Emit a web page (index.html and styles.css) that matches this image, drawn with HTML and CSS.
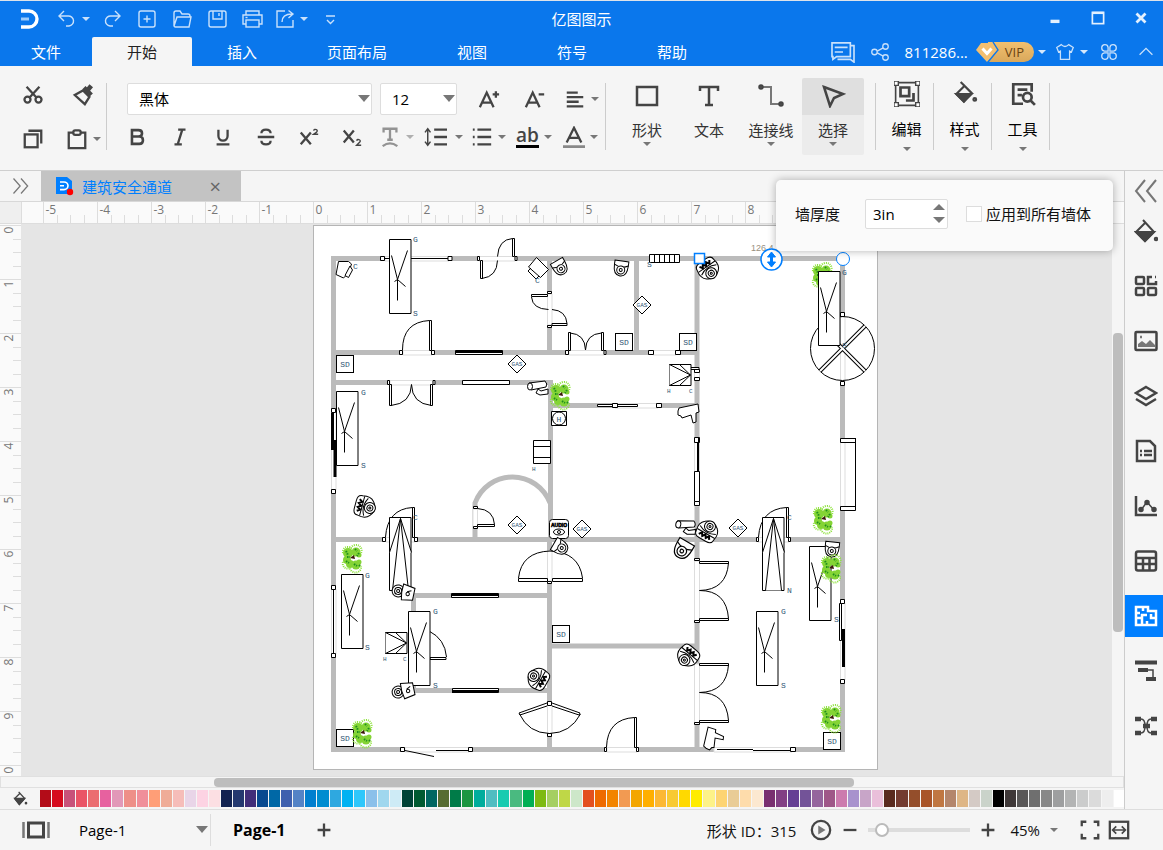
FILE: index.html
```html
<!DOCTYPE html>
<html lang="zh-CN">
<head>
  <meta charset="UTF-8">
  <title>亿图图示</title>
  <link rel="stylesheet" href="styles.css">
</head>
<body>

  <header class="header">
    <div class="title-bar">
      <div class="quick">
        <svg class="logo" viewBox="0 0 22 22"><path d="M2 3h8a8 8 0 0 1 0 16H2" fill="none" stroke="#fff" stroke-width="3.4"/><path d="M2 11h8" stroke="#9ccbfa" stroke-width="3"/></svg>
        <button class="quick-btn with-caret" aria-label="撤销"><svg viewBox="0 0 24 24"><path d="M9 4L4 9l5 5M4 9h9a5 5 0 0 1 1 10h-3"/></svg></button>
        <button class="quick-btn" aria-label="重做"><svg viewBox="0 0 24 24"><path d="M15 4l5 5-5 5M20 9h-9a5 5 0 0 0-1 10h3"/></svg></button>
        <button class="quick-btn" aria-label="新建"><svg viewBox="0 0 24 24"><rect x="4" y="4" width="16" height="16" rx="2"/><path d="M12 8.500v7M8.500 12h7"/></svg></button>
        <button class="quick-btn" aria-label="打开"><svg viewBox="0 0 24 24"><path d="M4 19V6q0-2 2-2h4l2 3h6q2 0 2 2v1M4 19l3-9h14l-2 10H5.500Q4 20 4 18"/></svg></button>
        <button class="quick-btn" aria-label="保存"><svg viewBox="0 0 24 24"><rect x="4" y="4" width="17" height="16" rx="2"/><path d="M8 4v8h9V4M14 6v3"/></svg></button>
        <button class="quick-btn" aria-label="打印"><svg viewBox="0 0 24 24"><path d="M6 8V4h13v4M6 17H3V8h19v9h-3"/><rect x="6" y="13" width="13" height="7"/><path d="M5.500 10.500h2"/></svg></button>
        <button class="quick-btn with-caret" aria-label="导出"><svg viewBox="0 0 24 24"><path d="M12 4H4v16h16v-7M9 15q0-8 10-8M15.500 3.500L20 7l-4.500 4"/></svg></button>
        <button class="quick-btn small" aria-label="自定义"><svg viewBox="0 0 24 24"><path d="M8 9h9M9 13l3.500 3.500L16 13"/></svg></button>
      </div>
      <h1 class="app-title">亿图图示</h1>
      <div class="window-controls">
        <button aria-label="最小化"><svg viewBox="0 0 16 16"><path d="M4 11h8" stroke-width="3"/></svg></button>
        <button aria-label="最大化"><svg viewBox="0 0 16 16"><rect x="3" y="3" width="10" height="10" stroke-width="1.500"/><path d="M3 3.500h10" stroke-width="2"/></svg></button>
        <button aria-label="关闭"><svg viewBox="0 0 16 16"><path d="M4 4l8 8M12 4l-8 8" stroke-width="2.500"/></svg></button>
      </div>
    </div>

    <div class="menu-bar">
      <nav class="menu">
        <button class="menu-tab file">文件</button>
        <button class="menu-tab active">开始</button>
        <button class="menu-tab">插入</button>
        <button class="menu-tab">页面布局</button>
        <button class="menu-tab">视图</button>
        <button class="menu-tab">符号</button>
        <button class="menu-tab">帮助</button>
      </nav>
      <div class="account">
        <button class="acc-btn message" aria-label="消息"><svg class="wide" viewBox="0 0 28 24"><path d="M2 2h20v15H7l-4 3V17H2zM22 5h4v18l-4-3H8M5 7h14M5 12h9" stroke-width="1.800"/></svg></button>
        <button class="acc-btn" aria-label="分享"><svg viewBox="0 0 24 24"><circle cx="6" cy="12" r="3"/><circle cx="18" cy="6" r="3"/><circle cx="18" cy="18" r="3"/><path d="M9 11l6.500-3.500M9 13l6.500 3.500"/></svg></button>
        <span class="user">811286...</span>
        <button class="vip"><svg viewBox="0 0 24 20"><path d="M5 1h12l5 8-11 11L0 8z" fill="#f3bf70" stroke="none"/><path d="M17 0l5 8-10 12" stroke="#0a77ec"/><path d="M6.500 6.500l4.500 5 4.500-5" stroke="#fff" stroke-width="3"/></svg>VIP</button>
        <i class="caret light"></i>
        <button class="acc-btn theme" aria-label="主题"><svg viewBox="0 0 24 24"><path d="M8 4L3 7l2 5 2-1v9h10v-9l2 1 2-5-5-3q-4 4-8 0z"/></svg></button>
        <i class="caret light"></i>
        <button class="acc-btn apps" aria-label="应用"><svg viewBox="0 0 24 24"><path d="M11 11H7A3.500 3.500 0 1 1 11 7zM13 11V7A3.500 3.500 0 1 1 17 11zM11 13v4A3.500 3.500 0 1 1 7 13zM13 13h4A3.500 3.500 0 1 1 13 17z"/></svg></button>
        <button class="acc-btn" aria-label="收起"><svg viewBox="0 0 24 24"><path d="M5 15l7-7 7 7"/></svg></button>
      </div>
    </div>
  </header>

  <section class="ribbon">
    <div class="group clipboard">
      <button class="tool" aria-label="剪切"><svg viewBox="0 0 24 24"><circle cx="6" cy="17" r="3.300"/><circle cx="18" cy="17" r="3.300"/><path d="M5 3l11 12M19 3L8 15"/></svg></button>
      <button class="tool" aria-label="格式刷"><svg viewBox="0 0 24 24"><path d="M3 12l9-5 7 7-5 8z"/><path d="M13 4l8 8M16 8l5-6" stroke-width="5"/></svg></button>
      <button class="tool" aria-label="复制"><svg viewBox="0 0 24 24"><rect x="3" y="7" width="14" height="14"/><path d="M7 3h14V17"/></svg></button>
      <button class="tool has-caret" aria-label="粘贴"><svg viewBox="0 0 24 24"><path d="M8 5H3v17h18V5h-5"/><rect x="8" y="2.500" width="8" height="5" rx="2"/></svg></button>
    </div>

    <div class="group font">
      <div class="row">
        <div class="select-box family"><select aria-label="字体"><option>黑体</option></select></div>
        <div class="select-box size"><select aria-label="字号"><option>12</option></select></div>
        <button class="tool grow" aria-label="增大字号"><svg viewBox="0 0 24 24"><path d="M2 21L9.500 5 17 21M5 16h9M16 7h7M19.500 3.500v7"/></svg></button>
        <button class="tool" aria-label="减小字号"><svg viewBox="0 0 24 24"><path d="M2 21L9.500 5 17 21M5 16h9M16 7h6"/></svg></button>
        <button class="tool has-caret" aria-label="对齐"><svg viewBox="0 0 24 24"><path d="M3 5h12M3 10h18M3 15h13M3 20h18"/></svg></button>
      </div>
      <div class="row">
        <button class="tool narrow" aria-label="加粗"><svg viewBox="0 0 24 24"><path d="M6.500 4.500h7q4 0 4 3.500t-4 3.500h-7zM6.500 11.500h8q4 0 4 4t-4 4h-8z" stroke-width="2.800"/></svg></button>
        <button class="tool narrow" aria-label="斜体"><svg viewBox="0 0 24 24"><path d="M10 4h8M6 20h8M14.500 4l-5 16" stroke-width="2.500"/></svg></button>
        <button class="tool narrow" aria-label="下划线"><svg viewBox="0 0 24 24"><path d="M7 4v7a5 5 0 0 0 10 0V4M5 20h14"/></svg></button>
        <button class="tool narrow" aria-label="删除线"><svg viewBox="0 0 24 24"><path d="M17 8q0-4-5-4t-5 4M17 16q0 4-5 4t-5-4M3 12h18"/></svg></button>
        <button class="tool narrow" aria-label="上标"><svg viewBox="0 0 24 24"><path d="M3 7l11 13M14 7L3 20" stroke-width="2.500"/><path d="M17 5q1-2 3-1t0 3l-3 2h5" stroke-width="1.500"/></svg></button>
        <button class="tool narrow" aria-label="下标"><svg viewBox="0 0 24 24"><path d="M3 5l11 13M14 5L3 18" stroke-width="2.500"/><path d="M17 16q1-2 3-1t0 3l-3 3h5" stroke-width="1.500"/></svg></button>
        <button class="tool has-caret disabled" aria-label="文字路径"><svg viewBox="0 0 24 24"><path d="M5 7V3h14v4M12 3v12M9 15h6M4 22q8-6 16 0"/></svg></button>
        <button class="tool has-caret" aria-label="行距"><svg class="wide" viewBox="0 0 28 24"><path d="M5 4v16M2 7l3-4 3 4M2 17l3 4 3-4" stroke-width="1.600"/><path d="M12 4h14M12 12h14M12 20h14"/></svg></button>
        <button class="tool has-caret" aria-label="项目符号"><svg viewBox="0 0 24 24"><path d="M7 4h15M7 12h15M7 20h15M2 4h2M2 12h2M2 20h2"/></svg></button>
        <button class="tool has-caret" aria-label="突出显示"><span class="ab">ab</span></button>
        <button class="tool has-caret" aria-label="字体颜色"><svg viewBox="0 0 24 24"><path d="M4 18L12 2l8 16M7 13h10"/><path d="M0 22.500h24" stroke="#888" stroke-width="3"/></svg></button>
      </div>
    </div>

    <div class="group big">
      <button class="big-btn has-caret"><svg viewBox="0 0 24 24"><rect x="2" y="3" width="20" height="18"/></svg>形状</button>
      <button class="big-btn"><svg viewBox="0 0 24 24"><path d="M3 7V3h18v4M12 3v18M8 21h8"/></svg>文本</button>
      <button class="big-btn has-caret"><svg viewBox="0 0 24 24"><path d="M3 3h9v17h9" stroke="#777" stroke-width="2"/><circle cx="2" cy="3" r="1.500"/><circle cx="22" cy="20" r="1.500"/></svg>连接线</button>
      <button class="big-btn has-caret selected"><svg viewBox="0 0 24 24"><path d="M3 3l19 7-9 4-4 8z"/></svg>选择</button>
    </div>
    <div class="group menu-group"><button class="big-btn has-caret"><svg viewBox="0 0 24 24"><path d="M1.500 1.500h21v21h-21z" stroke-width="1.500"/><path d="M0 0h4v4H0zM20 0h4v4h-4zM0 20h4v4H0zM20 20h4v4h-4z" fill="#fff" stroke-width="1.300"/><path d="M6 6h8v8H6zM18 11v7h-7"/></svg>编辑</button></div>
    <div class="group menu-group"><button class="big-btn has-caret"><svg viewBox="0 0 24 24"><path d="M8 1l10 10-7 8-7-7 7-7" stroke-width="2"/><path d="M4 12h14l-7 7z" fill="#444" stroke-width="2"/><circle cx="21" cy="17" r="1"/></svg>样式</button></div>
    <div class="group menu-group"><button class="big-btn has-caret"><svg viewBox="0 0 24 24"><path d="M20 10V3H3v18h9M7 8h9M7 13h4"/><circle cx="16" cy="15" r="4"/><path d="M19 18l4 4"/></svg>工具</button></div>
  </section>

  <main class="workspace">
    <section class="editor">
      <div class="doc-tabs">
        <button class="expand" aria-label="展开"><svg viewBox="0 0 24 24"><path d="M3 3l8 9-8 9M12 3l8 9-8 9"/></svg></button>
        <div class="doc-tab">
          <svg viewBox="0 0 20 20"><path d="M1 1h11l5 4v13H1z" fill="#007fff"/><path d="M5 6h4a4 3.800 0 0 1 0 7.600H5M5 9.800h4" fill="none" stroke="#fff" stroke-width="1.600"/><circle cx="15" cy="16" r="3.200" fill="#f00"/></svg>
          <a href="#page">建筑安全通道</a>
          <button aria-label="关闭">×</button>
        </div>
      </div>
      <div class="ruler-row">
        <div class="corner"></div>
        <svg class="ruler-x" id="rulerX"></svg>
      </div>
      <div class="stage">
        <svg class="ruler-y" id="rulerY"></svg>
        <div class="canvas">
          <svg class="page" id="page" viewBox="314 226 563 543" font-family="Liberation Sans, sans-serif">
            <defs>
              <g id="table"><path d="M0 0h21.500v74H0z" fill="#fff"/><path d="M2 16l6 24 10-29M8 40v21M5 42l3-2 8 7"/></g>
              <g id="sd"><rect width="17" height="17" fill="#fff"/><text x="8.500" y="11.500" class="plan-text mid">SD</text></g>
              <g id="gas"><path d="M0-9L9 0 0 9-9 0z" fill="#fff"/><text y="2" class="plan-text gas mid">GAS</text></g>
              <g id="plant" stroke="none">
                <g fill="#84d435"><circle cx="-4" cy="-5" r="5"/><circle cx="4" cy="-6" r="4.500"/><circle cx="-5" cy="2" r="4"/><circle cx="-2" cy="6" r="4"/><circle cx="4" cy="7" r="4.500"/><circle cx="7" cy="4" r="2.500"/><circle cx="7" cy="-3" r="2.500"/></g>
                <path d="M-9-5a5 5 0 0 1 8-5 5 5 0 0 1 10 5M-9 4a5 5 0 0 0 7 6 5 5 0 0 0 11-2" fill="none" stroke="#8ee23c" stroke-dasharray="1 1" stroke-width="2"/>
                <path d="M-6-7l2 4M3-9l2 2M7-5l-2 3M-6 3l3 2M2 6l3 2M-5-1h3M7 7l1 1" stroke="#1f8f1d" stroke-width="2" stroke-dasharray="1.500 1"/>
                <path d="M-2 0l4-3 1 4z" fill="#3a1708"/>
              </g>
              <g id="bench"><path d="M0 0h21.500v21H0z" fill="#fff"/><path d="M0 0l21 10.500L0 21M10 0l11 10.500L10 21"/></g>
              <g id="ramp"><path d="M0 0h21.500v73H0z" fill="#fff"/><path d="M0 35L11 1l11 34M3 73l8-72 8 72"/></g>
              <g id="dome"><path d="M-10-6q0-5 6-5h8q6 0 6 5 2 8-3 12-7 6-14 0-5-4-3-12z" fill="#fff"/><path d="M-10-4h20M-9 0q9-5 18 0"/><path d="M-6-8l2 3 2-3 2 3 2-3 2 3 2-3" stroke-width="2"/><circle cy="4" r="5.500"/><circle cy="4" r="3"/><circle cy="4" r="1"/></g>
              <g id="mini"><path d="M-7-7h14v4q0 11-7 11t-7-11z" fill="#fff"/><path d="M-7-3q7 4 14 0"/><circle cy="2" r="4"/><circle cy="2" r="1.500"/></g>
              <g id="bullet"><path d="M-9-5L7-7q3 3 1 6L-7 2q-4-3-2-7z" fill="#fff"/><ellipse cx="-8" cy="-1.500" rx="2.500" ry="3.500" fill="#fff"/><path d="M0 1l-2 4 4 2 8-1V1L3 3z" fill="#fff"/></g>
              <g id="gun"><path d="M-10-2L-9-5 10-9l1 8-3 1v9l-3 1-2-8-9 3-1-2-3-1z" fill="#fff"/></g>
              <g id="lock"><circle cx="-5" r="6" fill="#fff"/><circle cx="-5" r="3.500"/><circle cx="-5" r="1.500"/><path d="M-1-8l12 2v12l-11 2q-2-8-1-16z" fill="#fff"/><circle cx="5" cy="1" r="1.700"/><path d="M4-1l4-2"/></g>
            </defs>

            <g class="walls">
              <path d="M333.500 258.500h509v491h-509z"/>
              <path d="M334 352.500h363M334 382.500h217M551 405.500h146M334 539.500h509M413 595.500h137M413 690.500h137M550 646h147"/>
              <path d="M549.500 259v94M550.500 380v160M549.500 540v209M636.500 259v94M697 259v490M413.500 595v95M475 539v-36a40 40 0 0 1 75 0"/>
            </g>

            <g class="gaps">
              <path d="M385 256.500h64v4.500h-64zM479 256.500h36v4.500h-36zM547.500 294h4.500v31h-4.500zM403 350.500h29v4.500h-29zM390 380.500h43v4.500h-43zM569 350.500h35v4.500h-35zM653 350.500h23v4.500h-23zM615 403.500h43v4.500h-43z"/>
              <path d="M331.500 412h4.500v78h-4.500zM331.500 589h4.500v65h-4.500zM386 537.500h29v4.500h-29zM473 509h4.500v18H473zM758 537.500h31v4.500h-31zM547.500 551h4.500v30h-4.500zM547.500 705h4.500v29h-4.500zM405 747.500h64v4.500h-64z"/>
              <path d="M607 747.500h30v4.500h-30zM714 747.500h78v4.500h-78zM694.500 438h5v68h-5zM694.500 561h5v60h-5zM694.500 664h5v59h-5zM840.500 603h4.500v77h-4.500zM840.500 442h4.500v65h-4.500zM694.500 372h5v6h-5zM840.500 317h4.500v65h-4.500z"/>
            </g>

            <g class="lines">
              <!-- windows and posts -->
              <path d="M380.500 256.500h4v4h-4zM448 256.500h4v4h-4zM477.500 256.500h2v4h-2zM515 256.500h2v4h-2zM547.500 291.500h4v2h-4zM547.500 325.500h4v2h-4zM399.500 350.500h3v4h-3zM431.500 350.500h3v4h-3zM387.500 380.500h2v4h-2zM433 380.500h2v4h-2zM565.500 350.500h3v4h-3zM604 350.500h2v4h-2zM648.500 350.500h5v4h-5zM675.500 350.500h5v4h-5z"/>
              <path d="M331.500 408.500h4v4h-4zM331.500 489.500h4v4h-4zM331.500 585.500h4v4h-4zM331.500 653.500h4v4h-4zM382.500 537.500h3v4h-3zM414.500 537.500h3v4h-3zM473.500 506.500h4v2h-4zM473.500 526.500h4v2h-4zM756.500 537.500h2v4h-2zM788.500 537.500h2v4h-2zM547.500 581.500h4v2h-4zM547.500 701.500h4v4h-4zM547.500 733.500h4v3h-4z"/>
              <path d="M400.500 747.500h4v4h-4zM468.500 747.500h4v4h-4zM604.500 747.500h2v4h-2zM636.500 747.500h2v4h-2zM790.500 747.500h5v4h-5zM694.500 437.500h5v5h-5zM694.500 501.500h5v4h-5zM694.500 558.500h5v2h-5zM694.500 620.500h5v2h-5zM694.500 722.500h5v2h-5zM694.500 369.500h5v3h-5zM694.500 377.500h5v3h-5zM840.500 599.500h4v4h-4zM840.500 679.500h4v4h-4zM840.500 312.500h4v4h-4zM840.500 381.500h4v4h-4z"/>
              <path d="M385 258.500h63M333.500 590v63M436 750.500h33M405 750.500l29 6M717 749.500h36M753 750.500h37M597.500 404.500h40v2h-40zM690 367.500h9v2h-9z"/>
              <path d="M612.500 403.500h5v4h-5zM656.500 403.500h5v4h-5z"/>
              <path d="M462.500 380.500h47v4h-47zM455.500 350.500h47v4h-47zM451.500 593.500h47v4h-47zM452.500 688.500h46v4h-46zM697.500 442v30M694.500 471.500h5v30h-5zM698.500 437v35"/>
              <path d="M456 351.500h46M452 594.500h46M452 691.500h46M332.500 413v37M335 440v37M843.500 629v38" class="thick"/>
              <path d="M839.500 603.500h2v37h-2zM840.500 438.500h15v4h-15zM840.500 506.500h15v4h-15zM855.500 438v72"/>
              <path d="M649.500 254.500h30v8h-30zM654.500 254.500v8M659.500 254.500v8M664.500 254.500v8M669.500 254.500v8M674.500 254.500v8"/>

              <!-- doors -->
              <path d="M480.500 260.500h2v18h-2zM512.500 238.500h2v18h-2zM531.500 294.500h16v2h-16zM552 323.500h15v2h-15zM429.500 320.500h2v30h-2zM389.500 384.500h2v21h-2zM430.500 384.500h2v21h-2zM568.500 332.500h2v18h-2zM601.500 332.500h2v18h-2z"/>
              <path class="arc" d="M482 278.500q15-2 15.500-18M497.500 256.500q1-17 15-18M531.500 297q1 12 17 12.500M552 309.500q14 1 15 14M402.500 350q0-28 27-29.500M391 405.500q20-2 20.500-21 .5 19 20 21M570 333q15 1 15.500 17 .5-16 16-17"/>
              <path d="M477.500 524.500h17v2h-17zM412.500 507.500h2v30h-2zM786.500 507.500h2v30h-2zM518.500 578.500h29v3h-29zM552.500 578.500h30v3h-30zM430 657.500h16v2h-16zM634.500 717.500h2v30h-2zM699.500 561.500h29v2h-29zM699.500 618.500h29v2h-29zM699.500 663.500h29v2h-29zM699.500 720.500h29v2h-29z"/>
              <path class="arc" d="M477.500 508.500q16 1 17 16M385.500 537q2-28 27-29.500M758.500 537q2-28 28-29.500M518.500 578q3-26 31.500-27 29 1 32.500 27M429 631q16 8 17.500 26M606.500 747q1-28 28-29.500M728.500 563q-2 27-29 27.500 27 0 29 28M728.500 665q-2 27-29 27.500 27 0 29 28"/>
              <path class="arc" d="M547 703l-28 10 1 2 27-9M552 703l28 10-1 2-27-9M519.500 714q9 19 30 19.500 21-.5 31-19.500"/>

              <!-- revolving door -->
              <circle cx="842.500" cy="348.500" r="32" fill="none"/>
              <path d="M820 371l45-45M820 326l45 45" stroke-width="4"/>
              <path d="M820 371l45-45M820 326l45 45" stroke="#fff" stroke-width="2"/>

              <use href="#plant" x="822" y="276"/>
              <use href="#table" x="389.500" y="239.500"/>
              <use href="#table" x="336.500" y="391.500"/>
              <use href="#table" x="341.500" y="574.500"/>
              <use href="#table" x="408.500" y="611.500"/>
              <use href="#table" x="818.500" y="271.500"/>
              <use href="#table" x="809.500" y="546.500"/>
              <use href="#table" x="756.500" y="611.500"/>
              <use href="#ramp" x="389.500" y="517.500"/>
              <use href="#ramp" x="762.500" y="517.500"/>
              <use href="#bench" x="669.500" y="364.500"/>
              <use href="#bench" x="385.500" y="632.500"/>
              <path d="M533.500 440.500h17v23h-17zM533.500 446.500h17M533.500 457.500h17"/>

              <use href="#sd" x="336.500" y="355.500"/>
              <use href="#sd" x="615.500" y="333.500"/>
              <use href="#sd" x="679.500" y="333.500"/>
              <use href="#sd" x="552.500" y="625.500"/>
              <use href="#sd" x="336.500" y="729.500"/>
              <use href="#sd" x="823.500" y="732.500"/>
              <use href="#gas" x="517" y="364"/>
              <use href="#gas" x="642" y="305"/>
              <use href="#gas" x="517" y="525"/>
              <use href="#gas" x="582" y="529"/>
              <use href="#gas" x="738" y="528"/>
              <path d="M551.500 411.500h15v14h-15z"/><circle cx="559" cy="418.500" r="6.500"/><text x="559" y="421.500" class="plan-text mid">H</text>
              <rect x="549.500" y="519.500" width="19" height="19" rx="3"/><text x="559" y="527" class="audio mid">AUDIO</text><ellipse cx="559" cy="532" rx="5.500" ry="3"/><circle cx="559" cy="532" r="1.500"/>

              <!-- cameras -->
              <path d="M338.500 261.500l-2.500 13 7.500 3.500 5-5 3-9-3-2.500z"/><path d="M350 266l2.500 4-4 7.500-3.500-2z"/>
              <path d="M528.500 267l8-9.500 12 12-8 8z"/><path d="M531 268l-3 3 8 8 3-3" fill="none"/>
              <use href="#mini" transform="translate(560 267) rotate(-30)"/>
              <use href="#mini" transform="translate(621 268) rotate(8)"/>
              <use href="#dome" transform="translate(709 270) rotate(-35)"/>
              <use href="#dome" transform="translate(366 507) rotate(-75)"/>
              <use href="#dome" transform="translate(708 530) rotate(-150)"/>
              <use href="#dome" transform="translate(537 678) rotate(120)"/>
              <use href="#dome" transform="translate(687 657) rotate(40)"/>
              <use href="#bullet" transform="translate(538 388)"/>
              <use href="#bullet" transform="translate(686 527) rotate(8)"/>
              <use href="#gun" transform="translate(688 413)"/>
              <use href="#gun" transform="translate(712 740) rotate(-65)"/>
              <use href="#lock" transform="translate(403 592) rotate(12)"/>
              <use href="#lock" transform="translate(403 691) rotate(-12)"/>
              <use href="#mini" transform="translate(683 549) rotate(30) scale(1.200)"/>
              <use href="#mini" transform="translate(832 549) rotate(6)"/>
              <use href="#mini" transform="translate(560 547) rotate(-60)"/>

              <use href="#plant" x="560" y="395"/>
              <use href="#plant" x="352" y="558"/>
              <use href="#plant" x="823" y="519"/>
              <use href="#plant" x="831" y="568"/>
              <use href="#plant" x="362" y="733"/>
              <use href="#plant" x="831" y="718"/>
            </g>

            <g class="plan-text">
              <text x="413" y="242">G</text><text x="413" y="316">S</text>
              <text x="361" y="395">G</text><text x="361" y="468">S</text>
              <text x="365" y="578">G</text><text x="365" y="650">S</text>
              <text x="433" y="614">G</text><text x="433" y="688">S</text>
              <text x="842" y="275">G</text><text x="842" y="348">S</text>
              <text x="781" y="614">G</text><text x="781" y="688">S</text>
              <text x="834" y="622">S</text><text x="787" y="593">N</text>
              <text x="413" y="520">C</text><text x="787" y="520">C</text>
              <text x="353" y="269">C</text><text x="535" y="283">C</text><text x="647" y="267">S</text>
            </g>
            <g class="plan-text tiny">
              <text x="667" y="393">H</text><text x="689" y="393">C</text>
              <text x="383" y="661">H</text><text x="403" y="661">C</text><text x="532" y="471">H</text>
            </g>

            <!-- selected wall -->
            <text x="751" y="251" class="measure">126.4</text>
            <g fill="#fff" stroke="#007fff">
              <rect x="694.500" y="253.500" width="10" height="10" stroke-width="1.500"/>
              <circle cx="843" cy="259" r="6.500"/>
              <circle cx="771.500" cy="259.500" r="10.500" stroke-width="1.500"/>
              <path d="M771.500 252l4 5h-3v5h3l-4 5-4-5h3v-5h-3z" fill="#007fff"/>
            </g>
          </svg>
        </div>
        <div class="scroll-y"><div class="thumb"></div></div>
      </div>
      <div class="scroll-x"><div class="thumb"></div></div>
      <div class="palette">
        <svg class="bucket" viewBox="0 0 24 24"><path d="M10 2l9 10-8 9-7-9 8-8"/><path d="M4 12h15l-8 9z" fill="#444"/><circle cx="21" cy="19" r="1"/></svg>
        <div class="swatches" id="swatches"></div>
      </div>
    </section>

    <aside class="side">
      <button class="side-btn collapse" aria-label="收起面板"><svg viewBox="0 0 24 24"><path d="M11 1L2 12l9 11M22 1l-9 11 9 11"/></svg></button>
      <button class="side-btn first" aria-label="填充"><svg viewBox="0 0 24 24"><path d="M9 1l11 12-9 9-9-9 9-9" stroke-width="2"/><path d="M2 13h18l-9 9z" fill="#444" stroke-width="2"/><circle cx="22" cy="20" r="1"/></svg></button>
      <button class="side-btn" aria-label="符号库"><svg viewBox="0 0 24 24"><rect x="2" y="3" width="8" height="7" rx="1"/><rect x="2" y="14" width="8" height="7" rx="1"/><rect x="14" y="14" width="8" height="7" rx="1"/><path d="M18 3h-4v7h8V7M21 3h1"/></svg></button>
      <button class="side-btn" aria-label="图片"><svg viewBox="0 0 24 24"><rect x="1.500" y="3" width="21" height="18" rx="1"/><path d="M4 18v-3l4-3 4 3 4-4 5 5v2z" fill="#777" stroke="none"/><path d="M6 8h2" stroke="#777"/></svg></button>
      <button class="side-btn" aria-label="图层"><svg viewBox="0 0 24 24"><path d="M12 3l10 6-10 6L2 9zM2 15l10 6 10-6"/></svg></button>
      <button class="side-btn" aria-label="注释"><svg viewBox="0 0 24 24"><path d="M3 2h13l5 5v15H3z"/><path d="M6 12h2M10 12h8M6 16h2M10 16h8"/></svg></button>
      <button class="side-btn" aria-label="图表"><svg viewBox="0 0 24 24"><path d="M2 2v19h21"/><path d="M7 16l6-8 7 8" stroke-width="1.500"/><g fill="#444"><circle cx="7" cy="15.500" r="1.500"/><circle cx="13" cy="8.500" r="1.500"/><circle cx="20" cy="15.500" r="1.500"/></g></svg></button>
      <button class="side-btn" aria-label="表格"><svg viewBox="0 0 24 24"><rect x="2" y="2.500" width="20" height="19" rx="2"/><path d="M2 9h20M2 15h20M9 9v12M15.500 9v12"/></svg></button>
      <button class="side-btn active" aria-label="平面图"><svg viewBox="0 0 24 24"><path d="M2 3h12v4h8v14H2z"/><path d="M2 9h4M9 3v4M2 14h6v7M8 14v-3h5M13 17v4M22 14h-5v-4"/></svg></button>
      <button class="side-btn" aria-label="甘特图"><svg viewBox="0 0 24 24"><path d="M1 3.500h22" stroke-width="4"/><path d="M4 11h10M12 20h10" stroke-width="4"/><path d="M14 11h5v8" stroke-width="1.500"/></svg></button>
      <button class="side-btn" aria-label="思维导图"><svg viewBox="0 0 24 24"><path d="M1 5h6M17 5h6M1 19h6M17 19h6M9 12h7" stroke-width="4.500"/><path d="M7 5q4 0 4 7t-4 7M17 5q-4 0-4 7t4 7" stroke-width="1.500"/></svg></button>
    </aside>

    <form class="wall-options">
      <label for="thickness">墙厚度</label>
      <span class="spin">
        <input type="text" id="thickness" value="3in">
        <span class="spin-btns"><button type="button" class="up" aria-label="增加"></button><button type="button" class="down" aria-label="减少"></button></span>
      </span>
      <label class="check"><input type="checkbox">应用到所有墙体</label>
    </form>
  </main>

  <footer class="status">
    <button class="view-btn" aria-label="视图"><svg viewBox="0 0 28 24"><path d="M1.500 4v16M26.500 4v16" stroke="#777"/><rect x="6.500" y="5" width="15" height="14" stroke-width="3"/></svg></button>
    <div class="select-box page-select"><select aria-label="页面"><option>Page-1</option></select></div>
    <button class="page-tab">Page-1</button>
    <button class="icon-btn" aria-label="添加页面"><svg viewBox="0 0 24 24"><path d="M5 12h14M12 5v14" stroke-width="2.500"/></svg></button>
    <div class="status-right">
      <span class="shape-id">形状 ID：315</span>
      <button class="icon-btn" aria-label="播放"><svg viewBox="0 0 24 24"><circle cx="12" cy="12" r="10"/><path d="M9 7l8 5-8 5z" fill="#777" stroke="none"/></svg></button>
      <button class="icon-btn" aria-label="缩小"><svg viewBox="0 0 24 24"><path d="M5 12h14" stroke-width="2.500"/></svg></button>
      <input type="range" class="zoom" min="0" max="100" value="8" aria-label="缩放">
      <button class="icon-btn" aria-label="放大"><svg viewBox="0 0 24 24"><path d="M5 12h14M12 5v14" stroke-width="2.500"/></svg></button>
      <button class="zoom-value">45%<i class="caret"></i></button>
      <button class="icon-btn" aria-label="全屏"><svg viewBox="0 0 24 24"><path d="M3 8V3h5M16 3h5v5M21 16v5h-5M8 21H3v-5" stroke-width="2.500"/></svg></button>
      <button class="icon-btn" aria-label="适应宽度"><svg viewBox="0 0 24 24"><rect x="2" y="3" width="20" height="18"/><path d="M6 12h12M9 8l-4 4 4 4M15 8l4 4-4 4" stroke-width="1.800"/></svg></button>
    </div>
  </footer>

  <script>
    const colors = `b30c18 d60b1e c8527a ea5466 eb6d70 e7619f e298b8 ee8f88 f08f9a ff9e77 efac97 f6bdb9 e9d5e8 fdd3e3 fcdfe3
      112250 24386f 412e79 07498f 0068a6 3f60ae 5483c6 007fcf 008dd0 2ea8e0 00b2f2 2fc7fb 8bc0ea a0d7ee ceebf6
      004236 005a31 006661 566c31 007b48 1c9641 00ad9c 50bdc1 18cbb0 4aba80 00af54 7dba12 a5cf62 bfd747 cde7c9
      e3501e ee6a00 f28400 f29a52 f3a600 ffaf00 fcb834 f8ca33 ffd900 ffec00 fdf288 fdd472 e9cc96 fedcab fce8d0
      792f70 823f84 663f94 735398 95659d 9f5788 cc7bae a892cd c8a5c8 eabfda
      592a1e 733b30 944e2b a95529 c07742 b4866c deb686 d4cac5 cad3ca
      000000 3f3838 595757 6f6f6f 888888 9e9fa0 b3b4b4 cbcccc dbdbdb eeeeee ffffff`.split(/\s+/);

    document.getElementById('swatches').innerHTML = colors
      .map(c => `<button style="background:#${c}" aria-label="#${c}"></button>`).join('');

    // one inch is 54px at 45% zoom
    const unit = 54;
    const ticks = [14, 27, 41];

    function drawRuler(id, start, from, to, vertical) {
      let path = '';
      let labels = '';
      for (let i = from; i <= to; i++) {
        const p = start + i * unit + 0.5;
        path += vertical ? `M0 ${p}h21` : `M${p} 0v21`;
        ticks.forEach(t => {
          path += vertical ? `M13 ${p + t}h8` : `M${p + t} 13v8`;
        });
        labels += vertical
          ? `<text transform="translate(13 ${p + 8}) rotate(-90)">${i % 10}</text>`
          : `<text x="${p + 2}" y="12">${i}</text>`;
      }
      document.getElementById(id).innerHTML = `<path d="${path}"/>${labels}`;
    }

    drawRuler('rulerX', 291, -5, 8, false);
    drawRuler('rulerY', 1, 0, 10, true);
  </script>

</body>
</html>
```

FILE: styles.css
```css
* {
  box-sizing: border-box;
}

body {
  display: flex;
  flex-direction: column;
  height: 100vh;
  margin: 0;
  overflow: hidden;
  background-color: #f5f5f5;
  color: #111;
  font-family: "Open Sans", "Noto Sans CJK SC", sans-serif;
  font-size: 15px;
}

button {
  display: flex;
  align-items: center;
  justify-content: center;
  padding: 0;
  border: none;
  background: none;
  color: inherit;
  font: inherit;
  cursor: pointer;
}

button svg {
  width: 24px;
  height: 24px;
  flex: none;
  fill: none;
  stroke: #444;
  stroke-width: 2.5;
}

button svg.wide {
  width: 28px;
}

select, input {
  font: inherit;
  color: #000;
}

.caret {
  border: 4px solid transparent;
  border-top-color: #777;
  border-bottom: none;
}

.caret.light {
  border-top-color: #d5e8fc;
}

/* header */
.header {
  border-top: 1px solid #dde3ea;
  background-color: #0a77ec;
  color: #fff;
}

.header svg {
  stroke: #c9e1fb;
  stroke-width: 1.4;
}

.title-bar {
  display: grid;
  grid-template-columns: 1fr auto 1fr;
  align-items: center;
  height: 36px;
}

.quick {
  display: flex;
  align-items: center;
  padding-left: 19px;
}

.logo {
  width: 22px;
  height: 22px;
  margin-right: 10px;
}

.quick-btn {
  width: 35px;
}

.quick-btn.with-caret {
  width: 43px;
  gap: 3px;
}

.quick-btn.with-caret::after {
  content: "";
  border: 4px solid transparent;
  border-top-color: #c9e1fb;
  border-bottom: none;
}

.app-title {
  margin: 0;
  font-size: 15px;
  font-weight: normal;
  line-height: 20px;
}

.window-controls {
  display: flex;
  justify-content: flex-end;
  gap: 25px;
  padding: 0 13px 3px 0;
}

.window-controls svg {
  width: 18px;
  height: 18px;
  stroke: #e3f0fe;
}

.menu-bar {
  display: flex;
  justify-content: space-between;
  height: 29px;
}

.menu {
  display: flex;
}

.menu-tab {
  padding: 0 35px;
}

.menu-tab.file {
  padding: 0 31px;
}

.menu-tab.active {
  border-radius: 2px 2px 0 0;
  background-color: #f5f5f5;
  color: #222;
}

.account {
  display: flex;
  align-items: center;
  gap: 4px;
  padding-right: 6px;
}

.acc-btn svg {
  width: 22px;
  height: 22px;
}

.message {
  margin-right: 8px;
}

.theme {
  margin-left: 4px;
}

.apps {
  margin: 0 11px 0 6px;
}

.user {
  padding: 0 4px 0 10px;
}

.vip {
  height: 20px;
  padding-right: 10px;
  gap: 5px;
  border-radius: 10px;
  background: linear-gradient(to right, #0a77ec 12px, transparent 12px), linear-gradient(#f2c06e, #d9a85c);
  color: #6b4413;
  font-size: 13px;
}

/* ribbon */
.ribbon {
  display: flex;
  height: 105px;
  padding: 12px 0 15px;
  border-bottom: 1px solid #cfcfcf;
}

.group {
  border-right: 1px solid #ccc;
  margin: 5px 0;
}

.clipboard {
  display: grid;
  grid-template-columns: 50px 50px;
  grid-template-rows: 22px 22px;
  align-content: center;
  row-gap: 22px;
  width: 107px;
  padding-left: 8px;
}

.tool {
  width: 46px;
  gap: 5px;
}

.clipboard .tool {
  width: 50px;
}

.tool.narrow {
  width: 43px;
}

.tool svg {
  width: 22px;
  height: 22px;
}

.has-caret::after {
  content: "";
  border: 4px solid transparent;
  border-top-color: #777;
  border-bottom: none;
}

.disabled {
  opacity: 0.55;
}

.font {
  display: flex;
  flex-direction: column;
  justify-content: center;
  gap: 9px;
  padding: 0 1px 0 8px;
}

.row {
  display: flex;
  height: 32px;
}

.select-box {
  position: relative;
}

.select-box::after {
  content: "";
  position: absolute;
  right: 2px;
  top: 12px;
  border: 6px solid transparent;
  border-top: 7px solid #777;
  border-bottom: none;
  pointer-events: none;
}

.select-box select {
  width: 100%;
  height: 32px;
  padding: 0 11px;
  border: 1px solid #ddd;
  border-radius: 2px;
  background-color: #fff;
  appearance: none;
}

.family {
  width: 245px;
  margin: 0 8px 0 12px;
}

.size {
  width: 77px;
}

.grow {
  margin-left: 9px;
}

.ab {
  height: 22px;
  border-bottom: 3px solid #000;
  font-size: 19px;
  font-weight: 600;
  line-height: 18px;
  color: #444;
}

.big {
  display: flex;
  padding: 0 11px 0 10px;
}

.big-btn {
  flex-direction: column;
  justify-content: flex-start;
  width: 62px;
  margin: -5px 0;
  padding-top: 6px;
  color: #333;
}

.big-btn svg {
  width: 26px;
  height: 24px;
  margin-bottom: 11px;
}

.big-btn::after {
  margin-top: 2px;
}

.big-btn.selected {
  border-radius: 2px;
  background: linear-gradient(#dfdfdf 37px, #ececec 37px);
}

.menu-group .big-btn {
  width: 57px;
  padding: 3px 0 0 4px;
  color: #000;
}

.menu-group .big-btn::after {
  margin-top: 8px;
}

.menu-group svg {
  height: 26px;
}

/* workspace */
.workspace {
  position: relative;
  display: flex;
  flex: 1;
  min-height: 0;
}

.editor {
  display: flex;
  flex: 1;
  flex-direction: column;
  min-width: 0;
}

.doc-tabs {
  display: flex;
  height: 30px;
}

.expand {
  width: 41px;
}

.expand svg {
  width: 20px;
  height: 20px;
  stroke: #777;
  stroke-width: 1.5;
}

.doc-tab {
  display: flex;
  align-items: center;
  gap: 7px;
  width: 200px;
  padding: 0 20px 0 14px;
  background-color: #c3c3c3;
}

.doc-tab > svg {
  width: 20px;
  height: 20px;
}

.doc-tab a {
  color: #007fff;
  text-decoration: none;
}

.doc-tab button {
  margin-left: auto;
  color: #666;
  font-size: 20px;
}

.ruler-row {
  display: flex;
  height: 22px;
  border-top: 1px solid #d8d8d8;
}

.corner {
  width: 22px;
  border-right: 1px solid #ddd;
  background-color: #efefef;
}

.ruler-x, .ruler-y {
  background-color: #fafafa;
  fill: #777;
  font-size: 12px;
}

.ruler-x {
  flex: 1;
  min-width: 0;
  height: 21px;
}

.ruler-y {
  width: 21px;
  height: 100%;
  margin-right: 1px;
}

.ruler-x path, .ruler-y path {
  fill: none;
  stroke: #ddd;
}

.stage {
  display: flex;
  flex: 1;
  min-height: 0;
  border-top: 1px solid #ddd;
  background-color: #e5e5e5;
}

.canvas {
  flex: 1;
  min-width: 0;
  padding: 1px 0 0 291px;
  overflow: hidden;
}

.page {
  box-sizing: content-box;
  display: block;
  width: 563px;
  height: 543px;
  border: 1px solid #b5b5b5;
  background-color: #fff;
}

.scroll-y {
  width: 12px;
  padding-top: 109px;
  background-color: #f5f5f5;
}

.scroll-y .thumb {
  width: 10px;
  height: 299px;
  margin: 0 auto;
  border-radius: 4px;
  background-color: #bdbdbd;
}

.scroll-x {
  height: 12px;
  padding: 1px 0;
  border: 1px solid #e0e0e0;
}

.scroll-x .thumb {
  width: 57%;
  height: 9px;
  margin-left: 19%;
  border-radius: 4px;
  background-color: #bdbdbd;
}

.palette {
  display: flex;
  align-items: center;
  height: 21px;
}

.bucket {
  width: 16px;
  height: 17px;
  margin: 0 12px;
  fill: none;
  stroke: #444;
  stroke-width: 2;
}

.swatches {
  display: flex;
  flex: 1;
  gap: 1px;
}

.swatches button {
  flex: 1;
  height: 17px;
}

.side {
  width: 39px;
  border-left: 1px solid #ccc;
}

.side-btn {
  width: 38px;
  height: 42px;
  margin-bottom: 13px;
  padding-left: 4px;
}

.side-btn.collapse {
  height: 39px;
  margin: 0;
}

.side-btn.collapse svg {
  stroke: #777;
  stroke-width: 2;
}

.side-btn.active {
  background-color: #007fff;
}

.side-btn.active svg {
  stroke: #fff;
}

.wall-options {
  position: absolute;
  top: 9px;
  right: 50px;
  display: flex;
  align-items: center;
  width: 337px;
  height: 71px;
  padding: 0 19px 4px;
  border-radius: 5px;
  background-color: #fafafa;
  box-shadow: 0 0 8px rgba(0, 0, 0, 0.3);
}

.spin {
  display: flex;
  width: 83px;
  height: 30px;
  margin: 0 18px 0 25px;
  border: 1px solid #ddd;
  border-radius: 2px;
  background-color: #fff;
}

.spin input {
  width: 67px;
  padding: 0 7px;
  border: none;
  background: none;
}

.spin-btns {
  display: flex;
  flex-direction: column;
  justify-content: center;
  gap: 7px;
}

.up, .down {
  border: 6px solid transparent;
}

.up {
  border-top: none;
  border-bottom: 6px solid #777;
}

.down {
  border-bottom: none;
  border-top: 6px solid #777;
}

.check {
  display: flex;
  align-items: center;
  gap: 4px;
  white-space: nowrap;
}

.check input {
  width: 16px;
  height: 16px;
  margin: 0;
  border: 1px solid #ddd;
  background-color: #fff;
  appearance: none;
}

/* floor plan */
.walls {
  fill: none;
  stroke: #bbb;
  stroke-width: 5;
}

.gaps {
  fill: #fff;
  stroke: #ddd;
}

.lines {
  fill: #fff;
  stroke: #000;
}

.arc {
  fill: none;
}

.thick {
  stroke-width: 3;
}

.plan-text {
  fill: #2f5573;
  stroke: none;
  font-family: "Liberation Mono", monospace;
  font-size: 8px;
}

.plan-text.gas, .plan-text.tiny {
  font-size: 6px;
}

.audio {
  fill: #000;
  stroke: #000;
  stroke-width: 0.5;
  font-size: 5px;
  font-weight: bold;
}

.mid {
  text-anchor: middle;
}

.measure {
  fill: #998f80;
  font-size: 9px;
}

/* status bar */
.status {
  display: flex;
  align-items: center;
  height: 41px;
  border-top: 1px solid #ddd;
}

.view-btn {
  margin-left: 22px;
}

.view-btn svg {
  width: 28px;
}

.page-select {
  width: 143px;
  margin-left: 18px;
  border-right: 1px solid #ddd;
}

.page-select select {
  border: none;
  background: none;
}

.page-tab {
  margin: 0 27px 0 22px;
  color: #000;
  font-size: 16px;
  font-weight: bold;
}

.status-right {
  display: flex;
  align-items: center;
  gap: 7px;
  margin-left: auto;
  padding-right: 33px;
}

.shape-id {
  margin-right: 7px;
}

.zoom {
  width: 102px;
  height: 14px;
  margin: 0;
  background: linear-gradient(#ddd, #ddd) center / 100% 4px no-repeat;
  appearance: none;
}

.zoom::-webkit-slider-thumb {
  width: 14px;
  height: 14px;
  border: 2px solid #bbb;
  border-radius: 50%;
  background-color: #fff;
  appearance: none;
}

.icon-btn svg {
  width: 22px;
  height: 22px;
}

.zoom-value {
  gap: 10px;
  margin: 0 14px 0 4px;
}
```
